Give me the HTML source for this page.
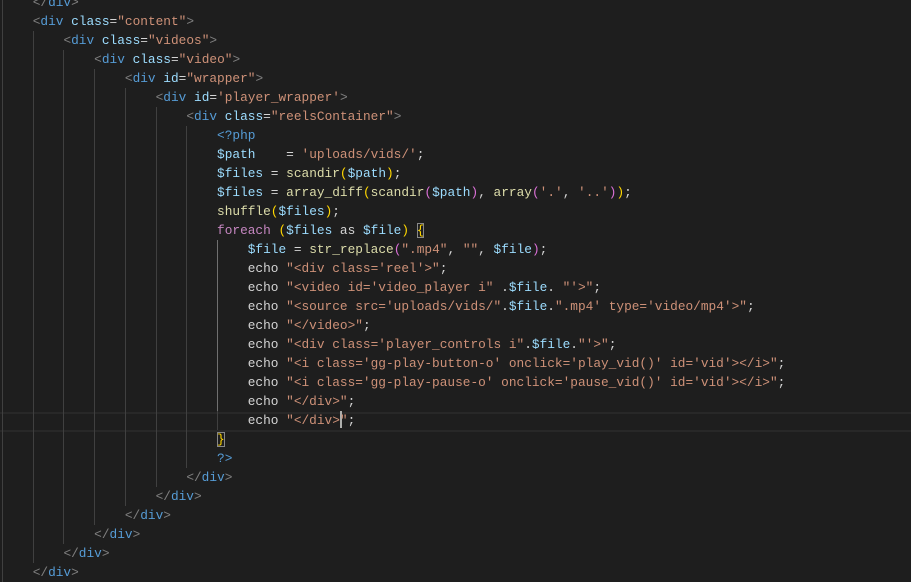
<!DOCTYPE html>
<html><head><meta charset="utf-8"><style>
html,body{margin:0;padding:0;background:#1e1e1e;width:911px;height:553px;overflow:hidden}
#ed{position:absolute;left:2px;top:-7px;font-family:"Liberation Mono",monospace;font-size:12.8px;line-height:19px;color:#d4d4d4}
.l{position:relative;height:19px;white-space:pre}
.g{position:absolute;top:0;width:1px;height:19px;background:#404040}
.ga{background:#707070}
.p{color:#808080}.t{color:#569cd6}.a{color:#9cdcfe}.s{color:#ce9178}.v{color:#9cdcfe}.f{color:#dcdcaa}.k{color:#c586c0}
.y{color:#ffd700}.m{color:#da70d6}.b{color:#179fff}
.box{outline:1px solid #888;outline-offset:-1px}
#hl{position:absolute;left:0;top:412px;width:911px;height:16px;border-top:2px solid #282828;border-bottom:2px solid #282828}
.cur{display:inline-block;width:2px;height:17px;background:#aeafad;vertical-align:-4px;margin-right:-2px}
</style></head><body>
<div id="hl"></div>
<div id="ed"><div class="l">    <span class="p">&lt;/</span><span class="t">div</span><span class="p">&gt;</span></div><div class="l">    <span class="p">&lt;</span><span class="t">div</span> <span class="a">class</span>=<span class="s">"content"</span><span class="p">&gt;</span></div><div class="l">        <span class="p">&lt;</span><span class="t">div</span> <span class="a">class</span>=<span class="s">"videos"</span><span class="p">&gt;</span></div><div class="l">            <span class="p">&lt;</span><span class="t">div</span> <span class="a">class</span>=<span class="s">"video"</span><span class="p">&gt;</span></div><div class="l">                <span class="p">&lt;</span><span class="t">div</span> <span class="a">id</span>=<span class="s">"wrapper"</span><span class="p">&gt;</span></div><div class="l">                    <span class="p">&lt;</span><span class="t">div</span> <span class="a">id</span>=<span class="s">'player_wrapper'</span><span class="p">&gt;</span></div><div class="l">                        <span class="p">&lt;</span><span class="t">div</span> <span class="a">class</span>=<span class="s">"reelsContainer"</span><span class="p">&gt;</span></div><div class="l">                            <span class="t">&lt;?php</span></div><div class="l">                            <span class="v">$path</span>    = <span class="s">'uploads/vids/'</span>;</div><div class="l">                            <span class="v">$files</span> = <span class="f">scandir</span><span class="y">(</span><span class="v">$path</span><span class="y">)</span>;</div><div class="l">                            <span class="v">$files</span> = <span class="f">array_diff</span><span class="y">(</span><span class="f">scandir</span><span class="m">(</span><span class="v">$path</span><span class="m">)</span>, <span class="f">array</span><span class="m">(</span><span class="s">'.'</span>, <span class="s">'..'</span><span class="m">)</span><span class="y">)</span>;</div><div class="l">                            <span class="f">shuffle</span><span class="y">(</span><span class="v">$files</span><span class="y">)</span>;</div><div class="l">                            <span class="k">foreach</span> <span class="y">(</span><span class="v">$files</span> as <span class="v">$file</span><span class="y">)</span> <span class="y box">{</span></div><div class="l">                                <span class="v">$file</span> = <span class="f">str_replace</span><span class="m">(</span><span class="s">".mp4"</span>, <span class="s">""</span>, <span class="v">$file</span><span class="m">)</span>;</div><div class="l">                                echo <span class="s">"&lt;div class='reel'&gt;"</span>;</div><div class="l">                                echo <span class="s">"&lt;video id='video_player i" </span>.<span class="v">$file</span>. <span class="s">"'&gt;"</span>;</div><div class="l">                                echo <span class="s">"&lt;source src='uploads/vids/"</span>.<span class="v">$file</span>.<span class="s">".mp4' type='video/mp4'&gt;"</span>;</div><div class="l">                                echo <span class="s">"&lt;/video&gt;"</span>;</div><div class="l">                                echo <span class="s">"&lt;div class='player_controls i"</span>.<span class="v">$file</span>.<span class="s">"'&gt;"</span>;</div><div class="l">                                echo <span class="s">"&lt;i class='gg-play-button-o' onclick='play_vid()' id='vid'&gt;&lt;/i&gt;"</span>;</div><div class="l">                                echo <span class="s">"&lt;i class='gg-play-pause-o' onclick='pause_vid()' id='vid'&gt;&lt;/i&gt;"</span>;</div><div class="l">                                echo <span class="s">"&lt;/div&gt;"</span>;</div><div class="l">                                echo <span class="s">"&lt;/div&gt;<span class="cur"></span>"</span>;</div><div class="l">                            <span class="y box">}</span></div><div class="l">                            <span class="t">?&gt;</span></div><div class="l">                        <span class="p">&lt;/</span><span class="t">div</span><span class="p">&gt;</span></div><div class="l">                    <span class="p">&lt;/</span><span class="t">div</span><span class="p">&gt;</span></div><div class="l">                <span class="p">&lt;/</span><span class="t">div</span><span class="p">&gt;</span></div><div class="l">            <span class="p">&lt;/</span><span class="t">div</span><span class="p">&gt;</span></div><div class="l">        <span class="p">&lt;/</span><span class="t">div</span><span class="p">&gt;</span></div><div class="l">    <span class="p">&lt;/</span><span class="t">div</span><span class="p">&gt;</span></div></div>
<script>
var ind=[4,4,8,12,16,20,24,28,28,28,28,28,28,32,32,32,32,32,32,32,32,32,32,28,28,24,20,16,12,8,4];
var ls=document.querySelectorAll('#ed .l');
ls.forEach(function(l,i){var n=ind[i];for(var c=0;c<n;c+=4){var g=document.createElement('div');g.className='g'+((c==28&&i>=13&&i<=21)?' ga':'');g.style.left=(c*7.68)+'px';l.appendChild(g);}});
</script>
</body></html>
